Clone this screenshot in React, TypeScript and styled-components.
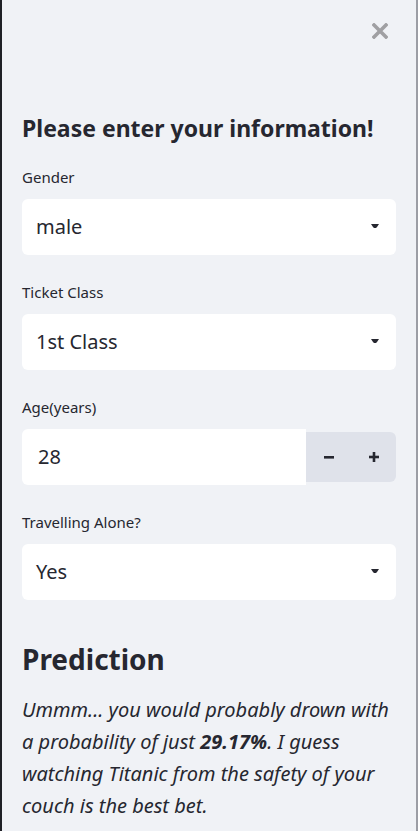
import React from "react";
import styled, { createGlobalStyle } from "styled-components";

const Global = createGlobalStyle`
  html, body { margin: 0; padding: 0; background: #f0f2f6; }
  body { font-family: "Noto Sans", "Open Sans", sans-serif; color: #262730; }
  * { box-sizing: border-box; }
`;

const Sidebar = styled.aside`
  width: 418px;
  height: 831px;
  overflow: hidden;
  background: #f0f2f6;
  border-left: 2px solid #1f2026;
  border-right: 2px solid #9c9ea5;
  padding: 0 20px;
  display: flex;
  flex-direction: column;
`;

const TopBar = styled.div`
  height: 62px;
  display: flex;
  justify-content: flex-end;
  align-items: center;
  margin-right: 4px;
`;

const CloseButton = styled.button`
  width: 24px;
  height: 24px;
  border: none;
  background: transparent;
  padding: 0;
  display: flex;
  align-items: center;
  justify-content: center;
  cursor: pointer;
`;

const Heading = styled.h3<{ $size: number; $top: number }>`
  margin: ${(p) => p.$top}px 0 0;
  font-size: ${(p) => p.$size}px;
  font-weight: 700;
  line-height: 1.25;
  color: #262730;
`;

const Fields = styled.div`
  display: flex;
  flex-direction: column;
  gap: 26px;
  margin-top: 23px;
`;

const Field = styled.div`
  display: flex;
  flex-direction: column;
  gap: 11px;
`;

const Label = styled.label`
  font-size: 15px;
  line-height: 22px;
  color: #262730;
`;

const SelectBox = styled.div`
  height: 56px;
  background: #ffffff;
  border-radius: 6px;
  display: flex;
  align-items: center;
  justify-content: space-between;
  padding: 0 17px 0 14px;
  font-size: 20px;
  color: #262730;
`;

const NumberRow = styled.div`
  height: 56px;
  display: flex;
  align-items: stretch;
`;

const NumberField = styled.div`
  flex: 1;
  background: #ffffff;
  border-radius: 6px 0 0 6px;
  display: flex;
  align-items: center;
  padding-left: 16px;
  font-size: 20px;
`;

const StepGroup = styled.div`
  width: 90px;
  margin: 3px 0;
  background: #dfe2ea;
  border-radius: 0 6px 6px 0;
  display: flex;
`;

const StepButton = styled.button`
  flex: 1;
  border: none;
  background: transparent;
  display: flex;
  align-items: center;
  justify-content: center;
  padding: 0;
  cursor: pointer;
`;

const Prediction = styled.section`
  display: flex;
  flex-direction: column;
  gap: 17px;
`;

const Paragraph = styled.p`
  margin: 0;
  font-size: 20px;
  line-height: 32px;
  font-style: italic;
  color: #262730;
`;

const Caret = () => (
  <svg width="8" height="5" viewBox="0 0 8 5">
    <polygon points="0,0 8,0 6,3 5,4 3,4 2,3" fill="#262730" />
  </svg>
);

const Select = ({ value }: { value: string }) => (
  <SelectBox>
    <span>{value}</span>
    <Caret />
  </SelectBox>
);

export default function App() {
  return (
    <>
      <Global />
      <Sidebar>
        <TopBar>
          <CloseButton aria-label="close">
            <svg width="16" height="16" viewBox="0 0 16 16">
              <path d="M2 2 L14 14 M14 2 L2 14" stroke="#a0a0a3" strokeWidth="3.6" strokeLinecap="square" />
            </svg>
          </CloseButton>
        </TopBar>
        <Heading $size={23} $top={52}>Please enter your information!</Heading>
        <Fields>
          <Field>
            <Label>Gender</Label>
            <Select value="male" />
          </Field>
          <Field>
            <Label>Ticket Class</Label>
            <Select value="1st Class" />
          </Field>
          <Field>
            <Label>Age(years)</Label>
            <NumberRow>
              <NumberField>28</NumberField>
              <StepGroup>
                <StepButton aria-label="minus">
                  <svg width="12" height="12" viewBox="0 0 12 12">
                    <rect x="1" y="5" width="10" height="2.6" fill="#262730" />
                  </svg>
                </StepButton>
                <StepButton aria-label="plus">
                  <svg width="12" height="12" viewBox="0 0 12 12">
                    <rect x="1" y="4.7" width="10" height="2.6" fill="#262730" />
                    <rect x="4.7" y="1" width="2.6" height="10" fill="#262730" />
                  </svg>
                </StepButton>
              </StepGroup>
            </NumberRow>
          </Field>
          <Field>
            <Label>Travelling Alone?</Label>
            <Select value="Yes" />
          </Field>
        </Fields>
        <Prediction>
          <Heading $size={28} $top={42}>Prediction</Heading>
          <Paragraph>
            Ummm... you would probably drown with a probability of just <b>29.17%</b>. I guess watching Titanic from the safety of your couch is the best bet.
          </Paragraph>
        </Prediction>
      </Sidebar>
    </>
  );
}
